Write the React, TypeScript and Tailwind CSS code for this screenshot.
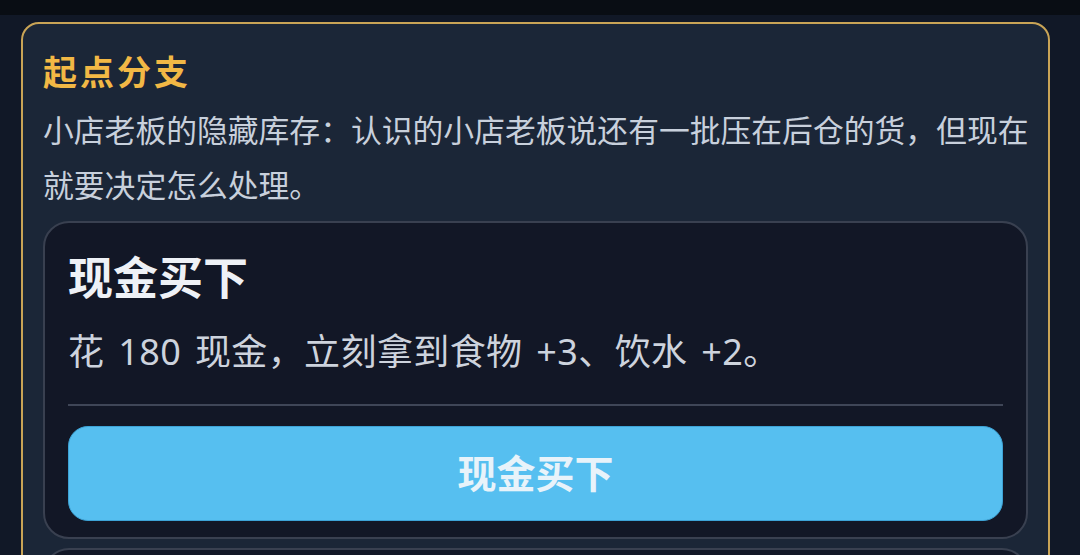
const font = {
  fontFamily: '"Noto Sans", "Noto Sans CJK SC", sans-serif',
};

function ChoiceCard({
  title,
  desc,
  action,
}: {
  title: string;
  desc: string;
  action: string;
}) {
  return (
    <div className="mt-[8px] rounded-[26px] border-2 border-[#394050] bg-[#121726] px-[23px] pt-[27px] pb-[16px]">
      <h3 className="text-[45px] font-bold leading-[56px] text-[#eef1f6]">{title}</h3>
      <p className="mt-[21px] text-[36px] leading-[50px] tracking-[0.4px] [word-spacing:4px] text-[#cdd3dd]">{desc}</p>
      <div className="mt-[27px] h-[2px] bg-[#3f4657]" />
      <button className="mt-[20px] flex h-[95px] w-full items-center justify-center rounded-[20px] border border-[#3da3d6] bg-[#56bff0] text-[39px] font-bold text-[#e8f3fa]">
        {action}
      </button>
    </div>
  );
}

export default function App() {
  return (
    <div className="h-[555px] w-[1080px] overflow-hidden bg-[#111827]" style={font}>
      <div className="h-[15px] bg-[#090d14]" />
      <div className="pt-[7px] pl-[21px] pr-[30px]">
        <section className="rounded-[18px] border-2 border-[#c9a456] bg-[#1b2637] px-[20px] pt-[25px]">
          <h2 className="text-[34px] font-bold leading-[46px] tracking-[3px] text-[#f2b845]">起点分支</h2>
          <p className="-mr-[6px] mt-[8px] text-[30.8px] leading-[55px] text-[#c8d0dc]">
            小店老板的隐藏库存：认识的小店老板说还有一批压在后仓的货，但现在就要决定怎么处理。
          </p>
          <ChoiceCard
            title="现金买下"
            desc="花 180 现金，立刻拿到食物 +3、饮水 +2。"
            action="现金买下"
          />
          <div className="mt-[9px] h-[60px] rounded-t-[26px] border-2 border-b-0 border-[#394050] bg-[#121726]" />
        </section>
      </div>
    </div>
  );
}
